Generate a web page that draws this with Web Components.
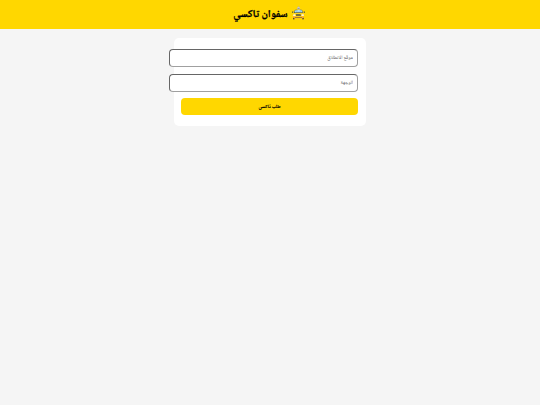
<!DOCTYPE html>
<html lang="ar" dir="rtl">
<head>
<meta charset="utf-8">
<title>سفوان تاكسي</title>
<style>
html, body {
    margin: 0;
    background: #f5f5f5;
    font-family: "Noto Naskh Arabic", "Liberation Sans", sans-serif;
}
</style>
</head>
<body>
<taxi-header><span slot="icon">🚖</span>سفوان تاكسي</taxi-header>
<taxi-form>
    <taxi-field placeholder="موقع الانطلاق"></taxi-field>
    <taxi-field placeholder="الوجهة"></taxi-field>
    <taxi-button>طلب تاكسي</taxi-button>
</taxi-form>

<script>
const headerTemplate = document.createElement('template')

headerTemplate.innerHTML = `
<style>
:host {
    display: flex;
    justify-content: center;
    align-items: center;
    height: 29px;
    padding-right: 1px;
    box-sizing: border-box;
    background: #ffd700;
    color: #000;
}

h1 {
    display: flex;
    align-items: center;
    gap: 3px;
    margin: 0;
    font-size: 10.5px;
    font-weight: 700;
    -webkit-text-stroke: 0.25px #000;
}

::slotted([slot="icon"]) {
    font-size: 12px;
    -webkit-text-stroke: 0;
}
</style>

<h1><slot name="icon"></slot><slot></slot></h1>`

class TaxiHeader extends HTMLElement {
    connectedCallback() {
        const shadow = this.attachShadow({ mode: 'open' })
        shadow.appendChild(headerTemplate.content.cloneNode(true))
    }
}

const formTemplate = document.createElement('template')

formTemplate.innerHTML = `
<style>
:host {
    display: flex;
    flex-direction: column;
    gap: 7px;
    box-sizing: border-box;
    width: 192px;
    margin: 9px auto 0;
    padding: 11px 8px 11px 7px;
    background: #fff;
    border-radius: 5px;
}
</style>

<slot></slot>`

class TaxiForm extends HTMLElement {
    connectedCallback() {
        const shadow = this.attachShadow({ mode: 'open' })
        shadow.appendChild(formTemplate.content.cloneNode(true))
    }
}

const fieldTemplate = document.createElement('template')

fieldTemplate.innerHTML = `
<style>
:host {
    display: block;
    height: 17.5px;
}

input {
    display: block;
    box-sizing: border-box;
    width: 189px;
    height: 18px;
    margin: 0;
    padding: 0 4px 1px;
    border: 1.5px solid;
    border-color: #666 #a0a0a0 #a0a0a0 #666;
    border-radius: 4px;
    outline: none;
    background: #fff;
    font: 5.2px "Noto Naskh Arabic", "Liberation Sans", sans-serif;
    direction: rtl;
}

input::placeholder {
    color: #666;
}
</style>

<input type="text">`

class TaxiField extends HTMLElement {
    connectedCallback() {
        const shadow = this.attachShadow({ mode: 'open' })
        shadow.appendChild(fieldTemplate.content.cloneNode(true))
        shadow.querySelector('input').placeholder = this.getAttribute('placeholder')
    }
}

const buttonTemplate = document.createElement('template')

buttonTemplate.innerHTML = `
<style>
:host {
    display: block;
}

button {
    display: block;
    width: 100%;
    height: 17px;
    padding: 0;
    border: none;
    border-radius: 4px;
    background: #ffd700;
    color: #000;
    font: 700 5px "Noto Naskh Arabic", "Liberation Sans", sans-serif;
    -webkit-text-stroke: 0.1px #000;
    cursor: pointer;
}
</style>

<button><slot></slot></button>`

class TaxiButton extends HTMLElement {
    connectedCallback() {
        const shadow = this.attachShadow({ mode: 'open' })
        shadow.appendChild(buttonTemplate.content.cloneNode(true))
    }
}

customElements.define('taxi-header', TaxiHeader)
customElements.define('taxi-form', TaxiForm)
customElements.define('taxi-field', TaxiField)
customElements.define('taxi-button', TaxiButton)
</script>
</body>
</html>
